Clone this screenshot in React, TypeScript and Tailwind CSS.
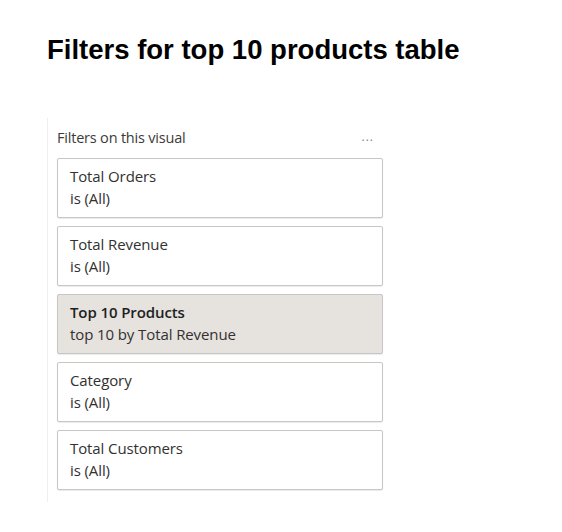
import React from "react";

const filters = [
  { title: "Total Orders", sub: "is (All)", active: false },
  { title: "Total Revenue", sub: "is (All)", active: false },
  { title: "Top 10 Products", sub: "top 10 by Total Revenue", active: true },
  { title: "Category", sub: "is (All)", active: false },
  { title: "Total Customers", sub: "is (All)", active: false },
];

export default function App() {
  return (
    <div className="w-[562px] h-[532px] bg-white overflow-hidden">
      <h1
        className="pl-[47px] pt-[33px] text-[27.5px] leading-[34px] font-bold text-black"
        style={{ fontFamily: '"Liberation Sans", Arial, sans-serif' }}
      >
        Filters for top 10 products table
      </h1>
      <div
        className="ml-[47px] mt-[51px] w-[345px] border-l border-[#f0efee] pl-[9px] pb-[12px] text-[#252423]"
        style={{ fontFamily: '"Open Sans", "Noto Sans", sans-serif' }}
      >
        <div className="flex items-center justify-between h-[40px] pr-[18px]">
          <span className="text-[14.5px] tracking-[-0.2px] text-[#3b3a39]">Filters on this visual</span>
          <span className="text-[12px] text-[#7a7f8c] tracking-[1px] -mt-[2px]">...</span>
        </div>
        <div className="flex flex-col gap-[8px] w-[326px]">
          {filters.map((f) => (
            <div
              key={f.title}
              className={`h-[60px] rounded-[2px] border border-[#c8c6c4] shadow-[0_1px_1px_rgba(0,0,0,0.08)] pl-[12px] pt-[7px] flex flex-col ${
                f.active ? "bg-[#e6e2de]" : "bg-white"
              }`}
            >
              <span
                className={`text-[15px] leading-[21px] tracking-[-0.1px] ${
                  f.active ? "font-semibold text-[#201f1e]" : "text-[#323130]"
                }`}
              >
                {f.title}
              </span>
              <span className="text-[15px] leading-[23px] tracking-[-0.1px] text-[#323130]">{f.sub}</span>
            </div>
          ))}
        </div>
      </div>
    </div>
  );
}
